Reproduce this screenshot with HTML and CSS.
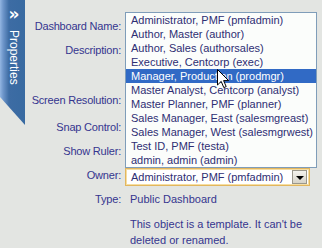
FILE: index.html
```html
<!DOCTYPE html>
<html lang="en">
<head>
    <meta charset="UTF-8">
    <title>Dashboard Properties</title>
    <link rel="stylesheet" href="styles.css">
</head>
<body>
    <div class="panel">
        <div class="side-tab">
            <span class="chevron">&raquo;</span>
            <span class="tab-label">Properties</span>
        </div>

        <div class="props">
            <div class="row">
                <label>Dashboard Name:</label>
                <input type="text" class="field" value="">
            </div>
            <div class="row tall">
                <label>Description:</label>
                <textarea class="field"></textarea>
            </div>
            <div class="row">
                <label>Screen Resolution:</label>
                <span></span>
            </div>
            <div class="row spaced">
                <label>Snap Control:</label>
                <span></span>
            </div>
            <div class="row">
                <label>Show Ruler:</label>
                <span></span>
            </div>
            <div class="row">
                <label>Owner:</label>
                <div class="select">
                    <span class="select-value">Administrator, PMF (pmfadmin)</span>
                    <span class="select-btn"><span class="arrow"></span></span>
                </div>
            </div>
            <div class="row">
                <label>Type:</label>
                <span class="value">Public Dashboard</span>
            </div>
            <p class="note">This object is a template. It can't be<br>deleted or renamed.</p>

            <!-- open owner list -->
            <ul class="owner-list">
                <li>Administrator, PMF (pmfadmin)</li>
                <li>Author, Master (author)</li>
                <li>Author, Sales (authorsales)</li>
                <li>Executive, Centcorp (exec)</li>
                <li class="selected">Manager, Production (prodmgr)</li>
                <li>Master Analyst, Centcorp (analyst)</li>
                <li>Master Planner, PMF (planner)</li>
                <li>Sales Manager, East (salesmgreast)</li>
                <li>Sales Manager, West (salesmgrwest)</li>
                <li>Test ID, PMF (testa)</li>
                <li>admin, admin (admin)</li>
            </ul>

            <svg class="cursor" width="13" height="20" viewBox="0 0 13 20">
                <path d="M0.5 0.5 L0.5 16 L4.2 12.4 L6.8 18.6 L9.2 17.6 L6.6 11.6 L11.6 11.6 Z" fill="#ffffff" stroke="#000000" stroke-width="1"/>
            </svg>
        </div>
    </div>
</body>
</html>
```
FILE: styles.css
```css
body {
    margin: 0;
    padding: 0;
    background-color: #e3e5e2;
    font-family: "Liberation Sans", Arial, sans-serif;
    font-size: 11px;
    color: #35358f;
}
.panel {
    display: flex;
    align-items: flex-start;
    height: 248px;
}
.side-tab {
    width: 25px;
    height: 125px;
    flex-shrink: 0;
    display: flex;
    flex-direction: column;
    align-items: center;
    background: linear-gradient(to right, #93b6e2 0, #6f97cb 3px, #3d6ca4 9px, #386aa1 100%);
    clip-path: polygon(0 0, 100% 0, 100% 100%, 0 97px);
    color: #ffffff;
}
.chevron {
    font-family: "DejaVu Sans", sans-serif;
    font-size: 17px;
    font-weight: bold;
    line-height: 14px;
    margin-top: 7px;
    margin-left: 3px;
}
.tab-label {
    writing-mode: vertical-rl;
    font-size: 12px;
    margin-top: 9px;
    margin-left: 3px;
}
.props {
    position: relative;
    flex: 1;
    padding-top: 14px;
}
.row {
    display: grid;
    grid-template-columns: 96px 1fr;
    column-gap: 4px;
    height: 24px;
    align-items: center;
}
.row label {
    text-align: right;
    white-space: nowrap;
    letter-spacing: -0.2px;
}
.row.tall {
    height: 50px;
    align-items: start;
}
.row.tall label {
    line-height: 24px;
}
.row.spaced {
    margin-top: 3px;
}
.field {
    width: 180px;
    height: 16px;
    border: 1px solid #7f9db9;
    margin: 0;
    padding: 0;
}
textarea.field {
    height: 40px;
    margin-top: 3px;
    resize: none;
}
.select {
    display: flex;
    align-items: center;
    width: 178px;
    height: 16px;
    border: 1px solid #e2b65e;
    box-shadow: inset 0 0 0 1px #f6dea2;
    background-color: #ffffff;
    padding-left: 5px;
    margin-top: 4px;
    color: #2e2e73;
}
.select-value {
    flex: 1;
    white-space: nowrap;
}
.select-btn {
    width: 15px;
    height: 14px;
    margin-right: 2px;
    display: flex;
    align-items: center;
    justify-content: center;
    background: linear-gradient(#f4f3ee, #d6d3c8);
    border: 1px solid #9a978c;
    box-sizing: border-box;
}
.arrow {
    width: 0;
    height: 0;
    border-left: 4px solid transparent;
    border-right: 4px solid transparent;
    border-top: 4px solid #000000;
    margin-top: 1px;
}
.value {
    padding-left: 5px;
}
.note {
    margin: 5px 0 0 105px;
    line-height: 16px;
}
.owner-list {
    position: absolute;
    left: 100px;
    top: 12px;
    width: 190px;
    margin: 0;
    padding: 0;
    list-style: none;
    background-color: #fbfdfb;
    border: 1px solid #7f9db9;
    color: #2e2e73;
}
.owner-list li {
    height: 14px;
    line-height: 14px;
    padding-left: 5px;
    white-space: nowrap;
}
.owner-list li.selected {
    background-color: #316ac5;
    color: #ffffff;
}
.cursor {
    position: absolute;
    left: 192px;
    top: 69px;
}
```
